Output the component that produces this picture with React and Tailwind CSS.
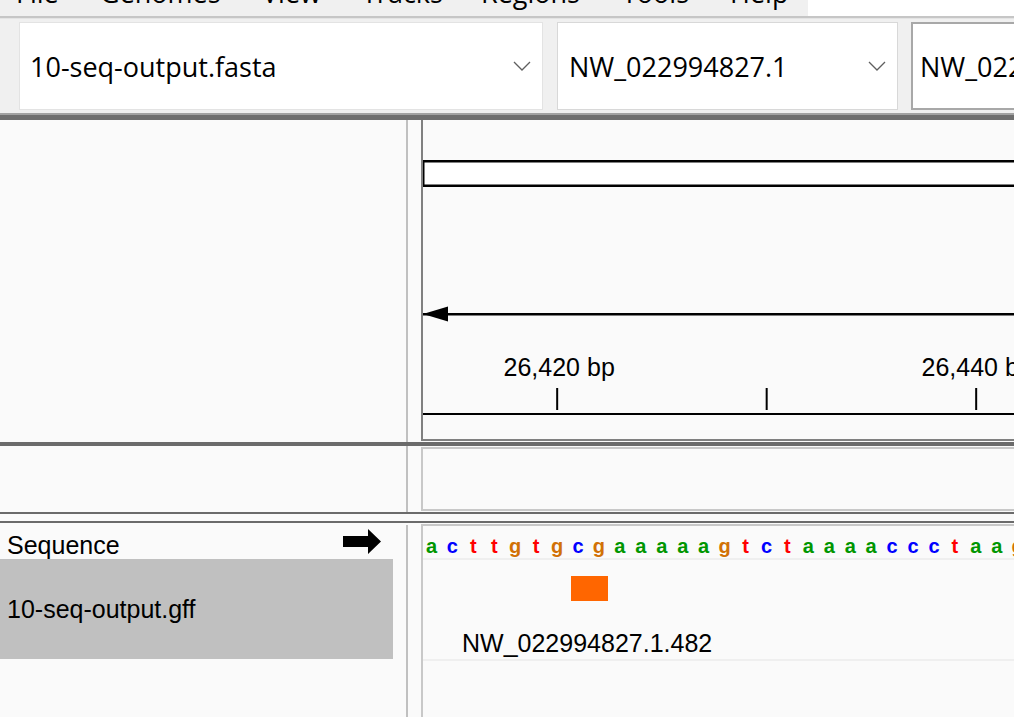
import React from "react";

const BASE = 20.95;
const seq = "acttgtgcgaaaaagtctaaaaccctaag";

const baseColor = {
  a: "text-[#009600]",
  c: "text-[#0000ff]",
  g: "text-[#d17105]",
  t: "text-[#ff0000]",
};

const menu = [
  ["File", "ml-[16px] w-[84px]"],
  ["Genomes", "w-[162px]"],
  ["View", "w-[100px]"],
  ["Tracks", "w-[119px]"],
  ["Regions", "w-[141px]"],
  ["Tools", "w-[108px]"],
  ["Help", "w-[78px]"],
];

function Chevron() {
  return (
    <svg width="18" height="10" viewBox="0 0 18 10" className="shrink-0">
      <path d="M1 1 L9 9 L17 1" fill="none" stroke="#5f5f5f" strokeWidth="1.3" />
    </svg>
  );
}

function Ruler() {
  // tick centers of bases 6, 16, 26 relative to the panel's inner edge
  const tick = (i) => BASE * (i + 0.5) - 2;
  const font = "'Liberation Sans', Arial, sans-serif";
  return (
    <svg width="600" height="319" className="block">
      <rect x="0" y="40" width="600" height="27" fill="#ffffff" />
      <rect x="0" y="40" width="600" height="2.5" fill="#000" />
      <rect x="0" y="64.5" width="600" height="2.5" fill="#000" />
      <rect x="0" y="40" width="1.5" height="27" fill="#000" />

      <rect x="0" y="193" width="600" height="2.5" fill="#000" />
      <polygon points="0,194 25,186.5 25,201.5" fill="#000" />

      <text x={tick(6) + 2} y="256" textAnchor="middle" fontFamily={font} fontSize="25" fill="#000">
        26,420 bp
      </text>
      <text x={tick(26) + 1} y="256" textAnchor="middle" fontFamily={font} fontSize="25" fill="#000">
        26,440 bp
      </text>
      {[6, 16, 26].map((i) => (
        <rect key={i} x={tick(i) - 1} y="268" width="2" height="22" fill="#000" />
      ))}
      <rect x="0" y="293" width="600" height="2" fill="#000" />
    </svg>
  );
}

export default function App() {
  return (
    <div className="w-[1014px] h-[717px] overflow-hidden bg-[#fafafa] text-black">
      {/* menu bar */}
      <div className="flex h-[16px] bg-white font-['Open_Sans',sans-serif]">
        <div className="w-[808px] h-[16px] bg-[#f0f0f0] overflow-hidden flex items-start">
          {menu.map(([t, cls]) => (
            <span key={t} className={`${cls} shrink-0 text-[27px] leading-none -mt-[21px] whitespace-nowrap`}>
              {t}
            </span>
          ))}
        </div>
      </div>
      <div className="h-[2px] bg-[#c6c6c6]" />
      <div className="h-[1px] bg-[#e4e4e4]" />

      {/* toolbar */}
      <div className="h-[94px] bg-[#f0f0f0] flex items-start pt-[3px] font-['Open_Sans',sans-serif] text-[27px] leading-none overflow-hidden">
        <div className="ml-[19px] w-[524px] h-[88px] shrink-0 bg-white border border-[#e3e3e3] flex items-center pl-[10px] pr-[11px]">
          <span className="flex-1 whitespace-nowrap">10-seq-output.fasta</span>
          <Chevron />
        </div>
        <div className="ml-[14px] w-[341px] h-[88px] shrink-0 bg-white border border-[#d8d8d8] flex items-center pl-[11px] pr-[11px]">
          <span className="flex-1 whitespace-nowrap">NW_022994827.1</span>
          <Chevron />
        </div>
        <div className="ml-[13px] w-[320px] h-[88px] shrink-0 bg-white border-2 border-[#a8a8a8] flex items-center pl-[7px]">
          <span className="whitespace-nowrap">NW_022994827.1:26,407-26,451</span>
        </div>
      </div>
      <div className="h-[2px] bg-[#a2a2a2]" />
      <div className="h-[5px] bg-[#6f6f6f]" />

      {/* upper panel: ideogram + ruler */}
      <div className="flex h-[322px] font-['Liberation_Sans',Arial,sans-serif]">
        <div className="w-[406px] shrink-0" />
        <div className="w-[2px] bg-[#c0c0c0] shrink-0" />
        <div className="w-[13px] shrink-0" />
        <div className="flex-1 h-[321px] border-l-2 border-b-2 border-[#808080] overflow-hidden">
          <Ruler />
        </div>
      </div>
      <div className="h-[4px] bg-[#6b6b6b]" />

      {/* middle (empty) panel */}
      <div className="flex h-[66px]">
        <div className="w-[406px] shrink-0" />
        <div className="w-[2px] bg-[#c0c0c0] shrink-0" />
        <div className="w-[13px] shrink-0" />
        <div className="flex-1 my-[1px] border-l-2 border-y-2 border-[#c8c8c8]" />
      </div>
      <div className="h-[2px] bg-[#6b6b6b]" />
      <div className="h-[7px]" />
      <div className="h-[2px] bg-[#6b6b6b]" />

      {/* feature panel */}
      <div className="flex h-[194px] font-['Liberation_Sans',Arial,sans-serif]">
        <div className="w-[406px] shrink-0 flex flex-col">
          <div className="h-[36px] flex items-start">
            <span className="ml-[7px] mt-[10px] text-[25px] leading-none">Sequence</span>
            <svg width="38" height="25" viewBox="0 0 38 25" className="ml-auto mr-[25px] mt-[6px]">
              <path d="M0 7 H25 V0 L38 12.5 L25 25 V18 H0 Z" fill="#000" />
            </svg>
          </div>
          <div className="w-[393px] h-[100px] bg-[#c0c0c0] flex items-center pl-[7px] text-[25px] leading-none">
            10-seq-output.gff
          </div>
        </div>
        <div className="w-[2px] bg-[#c0c0c0] shrink-0 mt-[2px]" />
        <div className="w-[13px] shrink-0" />
        <div className="flex-1 mt-[1px] border-l-2 border-t-2 border-[#c8c8c8] overflow-hidden flex flex-col">
          <div className="h-[32px] flex items-start pt-[10px] -ml-[2px]">
            {seq.split("").map((b, i) => (
              <span
                key={i}
                className={`w-[20.95px] shrink-0 text-center text-[20px] font-bold leading-none ${baseColor[b]}`}
              >
                {b}
              </span>
            ))}
          </div>
          <div className="h-[2px] bg-[#efefef]" />
          <div className="h-[99px] relative">
            <div className="absolute left-[148px] top-[16px] w-[37px] h-[25px] bg-[#ff6600]" />
            <span className="absolute left-[39px] top-[71px] text-[25px] leading-none whitespace-nowrap">
              NW_022994827.1.482
            </span>
          </div>
          <div className="h-[2px] bg-[#efefef]" />
        </div>
      </div>
    </div>
  );
}
